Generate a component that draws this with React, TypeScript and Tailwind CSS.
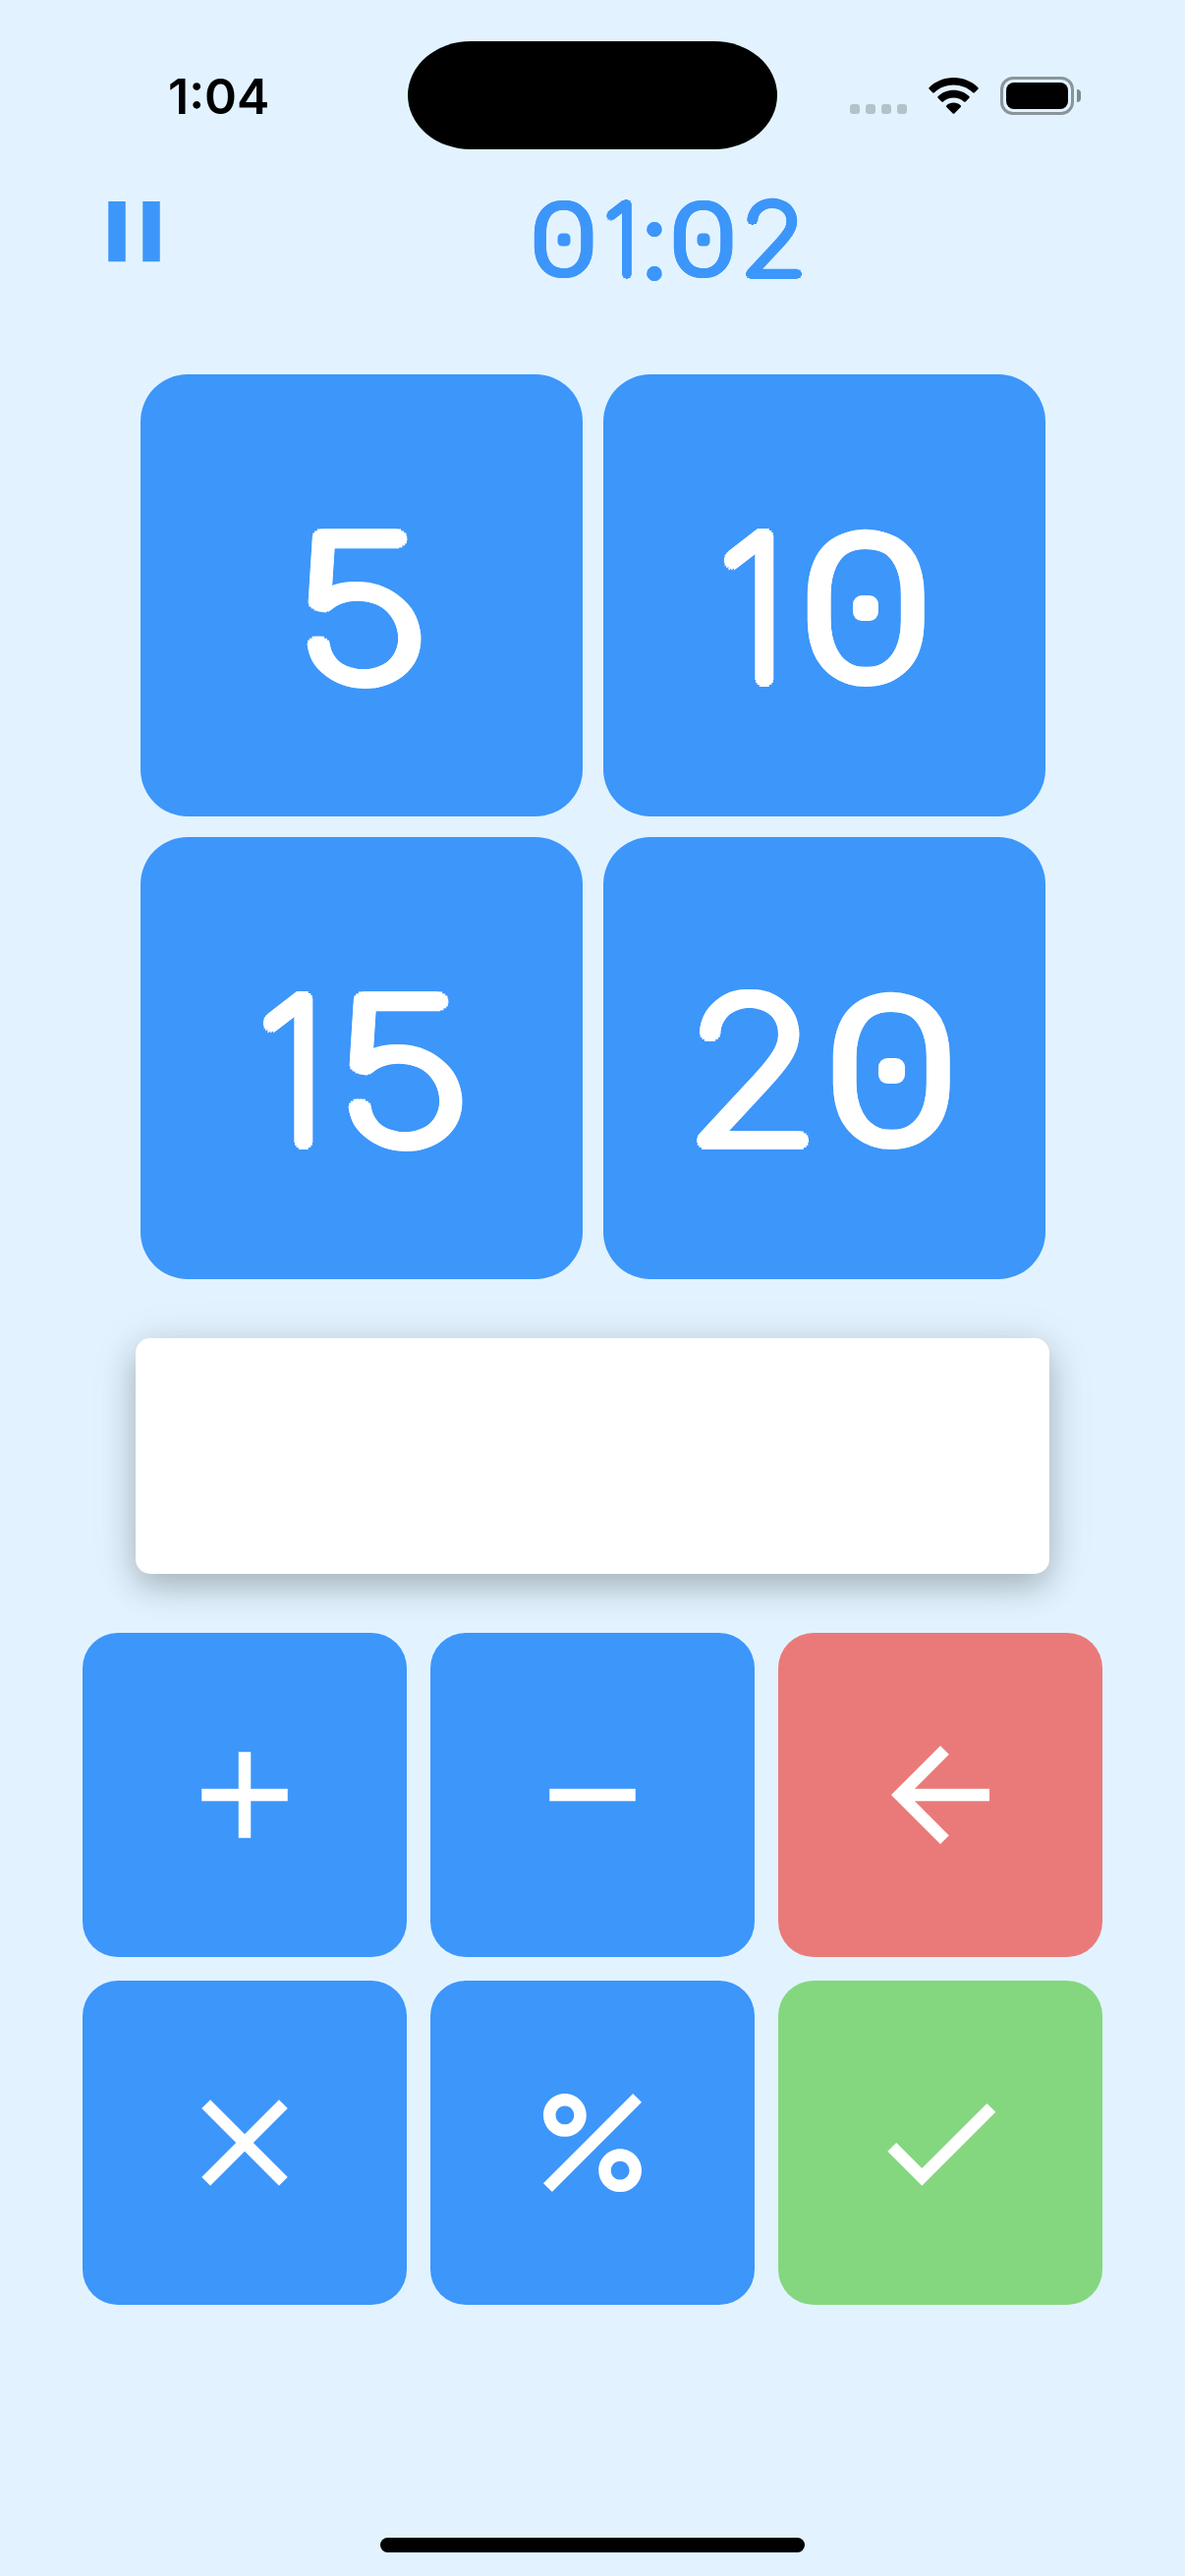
import type { ReactNode } from "react";
import { MdAdd, MdArrowBack, MdCheck, MdClose, MdPause, MdPercent, MdRemove } from "react-icons/md";

// Box width, face and horizontal scale of each character of the display text, in em.
const GLYPHS: Record<string, { box: string; ink: string }> = {
  "0": {
    box: "w-[0.723em] after:absolute after:left-1/2 after:top-1/2 after:size-[0.129em] after:-translate-x-1/2 after:-translate-y-1/2 after:rounded-[0.045em] after:bg-current after:content-['']",
    ink: "font-['Roboto'] scale-x-[1.18] scale-y-[0.98] translate-y-[0.013em]",
  },
  "1": { box: "w-[0.421em]", ink: "scale-x-[0.97] translate-x-[0.006em]" },
  "2": { box: "w-[0.683em]", ink: "scale-x-[1.1]" },
  "5": { box: "w-[0.703em]", ink: "scale-x-[1.2] scale-y-[0.99] skew-x-[4deg] -translate-x-[0.008em]" },
  ":": { box: "w-[0.267em]", ink: "font-extralight translate-y-[0.025em]" },
};

// Thin digits thickened by a ring of shadows, which rounds every stroke end.
function Digits({ value, className }: { value: string; className: string }) {
  return (
    <span
      className={`inline-flex font-['Inter',sans-serif] font-thin leading-none [text-shadow:0.037em_0_0,0.034em_0.014em_0,0.026em_0.026em_0,0.014em_0.034em_0,0_0.037em_0,-0.014em_0.034em_0,-0.026em_0.026em_0,-0.034em_0.014em_0,-0.037em_0_0,-0.034em_-0.014em_0,-0.026em_-0.026em_0,-0.014em_-0.034em_0,0_-0.037em_0,0.014em_-0.034em_0,0.026em_-0.026em_0,0.034em_-0.014em_0] ${className}`}
    >
      {value.split("").map((c, i) => (
        <span key={i} className={`relative flex justify-center ${GLYPHS[c].box}`}>
          <span className={GLYPHS[c].ink}>{c}</span>
        </span>
      ))}
    </span>
  );
}

function StatusBar() {
  return (
    <div className="flex h-[183px] items-start">
      <div className="ml-[171px] mt-[68px] w-[244px] font-['Inter',sans-serif] text-[50px] font-semibold leading-[60px] text-black">
        1:04
      </div>
      <div className="mt-[42px] h-[110px] w-[376px] rounded-[64px/55px] bg-black" />
      <div className="ml-[74px] mt-[106px] flex gap-[6px]">
        {[0, 1, 2, 3].map((i) => (
          <span key={i} className="size-[10px] rounded-[3px] bg-[#b5c2cc]" />
        ))}
      </div>
      <svg className="ml-[22px] mt-[79px] h-[37px] w-[51px]" viewBox="0 0 51 37">
        <path d="M25.500 0C35.300 0 44.200 3.900 50.300 9.900Q51.200 10.800 50.300 11.700L46.800 15.200Q46 16 45.100 15.200C39.900 10.400 33 7.600 25.500 7.600S11.100 10.400 5.900 15.200Q5 16 4.200 15.200L0.700 11.700Q-0.200 10.800 0.700 9.900C6.800 3.900 15.700 0 25.500 0Z" />
        <path d="M25.500 12.800C31.700 12.800 37.300 15.200 41.400 19.100Q42.200 19.900 41.400 20.700L37.700 24.400Q36.900 25.200 36 24.400C33.200 21.900 29.500 20.400 25.500 20.400S17.800 21.900 15 24.400Q14.100 25.200 13.300 24.400L9.600 20.700Q8.800 19.900 9.600 19.100C13.700 15.200 19.300 12.800 25.500 12.800Z" />
        <path d="M25.500 25.600C28.300 25.600 30.800 26.600 32.600 28.200Q33.500 29 32.700 29.900L26.300 36.400Q25.500 37.200 24.700 36.400L18.300 29.900Q17.500 29 18.400 28.200C20.200 26.600 22.700 25.600 25.500 25.600Z" />
      </svg>
      <div className="ml-[22px] mt-[78px] flex h-[39px] w-[75px] rounded-[13px] border-[3px] border-[#8a959b] p-[3px]">
        <div className="flex-1 rounded-[8px] bg-black" />
      </div>
      <div className="ml-[3px] mt-[91px] h-[13px] w-[4px] rounded-r-full bg-[#7f8990]" />
    </div>
  );
}

function NumberTile({ value }: { value: string }) {
  return (
    <button className="flex size-[450px] items-center justify-center rounded-[48px] bg-[#3d96fa] pt-[26px] text-white">
      <Digits value={value} className="text-[202px]" />
    </button>
  );
}

function Key({ color, children }: { color: string; children: ReactNode }) {
  return (
    <button className={`flex size-[330px] items-center justify-center rounded-[36px] text-[150px] text-white ${color}`}>
      {children}
    </button>
  );
}

export default function App() {
  return (
    <div className="flex h-[2622px] w-[1206px] flex-col overflow-hidden bg-[#e2f3ff]">
      <StatusBar />
      <header className="flex h-[198px] items-start pl-[84px] text-[#3d96fa]">
        <MdPause className="size-[105px]" />
        <Digits value="01:02" className="ml-[348px] mt-[10px] text-[101px]" />
      </header>
      <main className="flex flex-col items-center">
        <div className="grid grid-cols-2 gap-[21px]">
          <NumberTile value="5" />
          <NumberTile value="10" />
          <NumberTile value="15" />
          <NumberTile value="20" />
        </div>
        <div className="mt-[60px] h-[240px] w-[930px] rounded-[15px] bg-white shadow-[0_12px_33px_0_rgba(0,0,0,0.23),0_6px_54px_0_rgba(0,0,0,0.08)]" />
        <div className="mt-[60px] grid grid-cols-3 gap-6">
          <Key color="bg-[#3d96fa]"><MdAdd /></Key>
          <Key color="bg-[#3d96fa]"><MdRemove /></Key>
          <Key color="bg-[#ea7a7a]"><MdArrowBack /></Key>
          <Key color="bg-[#3d96fa]"><MdClose /></Key>
          <Key color="bg-[#3d96fa]"><MdPercent /></Key>
          <Key color="bg-[#84d77f]"><MdCheck /></Key>
        </div>
      </main>
      <div className="mx-auto mb-6 mt-auto h-[15px] w-[432px] rounded-full bg-black" />
    </div>
  );
}
